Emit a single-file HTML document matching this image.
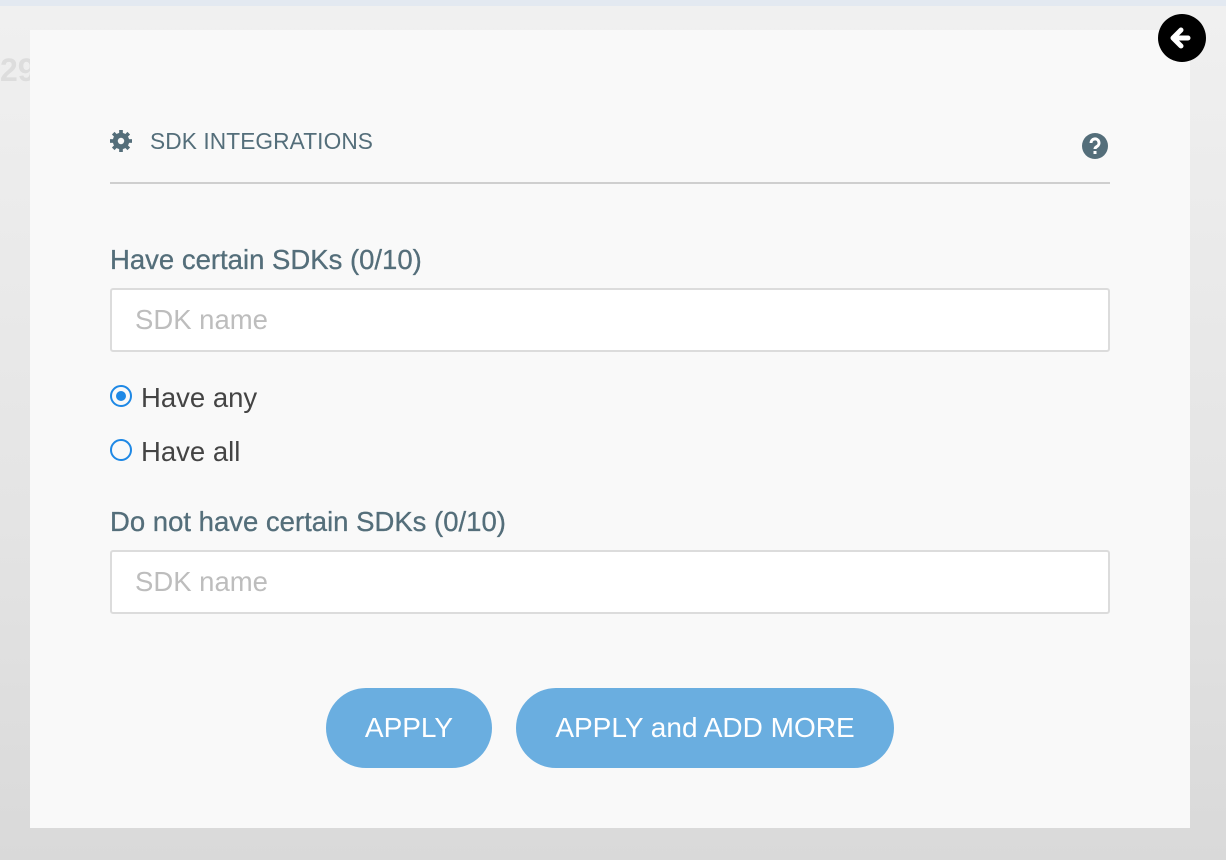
<!DOCTYPE html>
<html><head><meta charset="utf-8"><style>
*{box-sizing:border-box;margin:0;padding:0}
body{width:1226px;height:860px;overflow:hidden;background:#dcdcdc;font-family:"Liberation Sans",sans-serif;position:relative}
.topbar{position:absolute;left:0;top:0;width:1226px;height:6px;background:#e3e9f1}
.bg{position:absolute;left:0;top:6px;width:1226px;height:854px;background:linear-gradient(#f0f0f0,#e4e4e4 60%,#d9d9d9)}
.modal{position:absolute;left:30px;top:30px;width:1160px;height:798px;background:#f9f9f9}
.hdr{position:absolute;left:80px;top:98px;font-size:22.7px;color:#546e7a;letter-spacing:0.1px}
.line{position:absolute;left:80px;top:152px;width:1000px;height:2px;background:#cfcfcf}
.lbl{position:absolute;left:80px;font-size:27.5px;color:#546e7a;-webkit-text-stroke:0.3px #546e7a}
.inp{position:absolute;left:80px;width:1000px;height:64px;border:2px solid #dcdcdc;background:#fff;border-radius:3px;font-size:27.5px;color:#bdbdbd;padding:14px 23px}
.rad{position:absolute;left:80px;font-size:27.5px;color:#444;display:flex;align-items:center}
.rad i{display:inline-block;width:22px;height:22px;border:2px solid #1e88e5;border-radius:50%;margin-right:9px;position:relative;top:-2px}
.rad i.on::after{content:"";position:absolute;left:4px;top:4px;width:10px;height:10px;border-radius:50%;background:#1e88e5}
.btn{position:absolute;top:658px;height:80px;border-radius:40px;background:#6aaee0;color:#fff;font-size:28px;display:flex;align-items:center;justify-content:center}
</style></head><body>
<div class="topbar"></div><div class="bg"></div>
<div style="position:absolute;left:0;top:52px;font-size:32px;font-weight:bold;color:#ddd">29</div>
<div class="modal">
<svg style="position:absolute;left:80px;top:100px" width="22" height="22" viewBox="0 0 24 24"><circle cx="12" cy="12" r="9" fill="#546e7a"/><g fill="#546e7a"><rect x="10" y="0" width="4" height="5"/><rect x="10" y="19" width="4" height="5"/><rect x="0" y="10" width="5" height="4"/><rect x="19" y="10" width="5" height="4"/><rect x="10" y="0" width="4" height="5" transform="rotate(45 12 12)"/><rect x="10" y="19" width="4" height="5" transform="rotate(45 12 12)"/><rect x="0" y="10" width="5" height="4" transform="rotate(45 12 12)"/><rect x="19" y="10" width="5" height="4" transform="rotate(45 12 12)"/></g><circle cx="12" cy="12" r="3.5" fill="#f9f9f9"/></svg>
<div class="hdr" style="left:120px">SDK INTEGRATIONS</div>
<svg style="position:absolute;left:1052px;top:103px" width="26" height="26" viewBox="0 0 26 26"><circle cx="13" cy="13" r="13" fill="#546e7a"/><path d="M9 10a4 4 0 1 1 6 3.4c-1.2.7-2 1.2-2 2.6" stroke="#fff" stroke-width="3" fill="none"/><rect x="11.5" y="18" width="3" height="3" fill="#fff"/></svg>
<div class="line"></div>
<div class="lbl" style="top:214px">Have certain SDKs (0/10)</div>
<div class="inp" style="top:258px">SDK name</div>
<div class="rad" style="top:352px"><i class="on"></i>Have any</div>
<div class="rad" style="top:406px"><i></i>Have all</div>
<div class="lbl" style="top:476px">Do not have certain SDKs (0/10)</div>
<div class="inp" style="top:520px">SDK name</div>
<div class="btn" style="left:296px;width:166px">APPLY</div>
<div class="btn" style="left:486px;width:378px">APPLY and ADD MORE</div>
</div>
<svg style="position:absolute;left:1158px;top:14px" width="48" height="48" viewBox="0 0 48 48"><circle cx="24" cy="24" r="24" fill="#000"/><path d="M30 24H16M23 16l-8 8 8 8" stroke="#fff" stroke-width="5" stroke-linecap="round" stroke-linejoin="round" fill="none"/></svg>
</body></html>
